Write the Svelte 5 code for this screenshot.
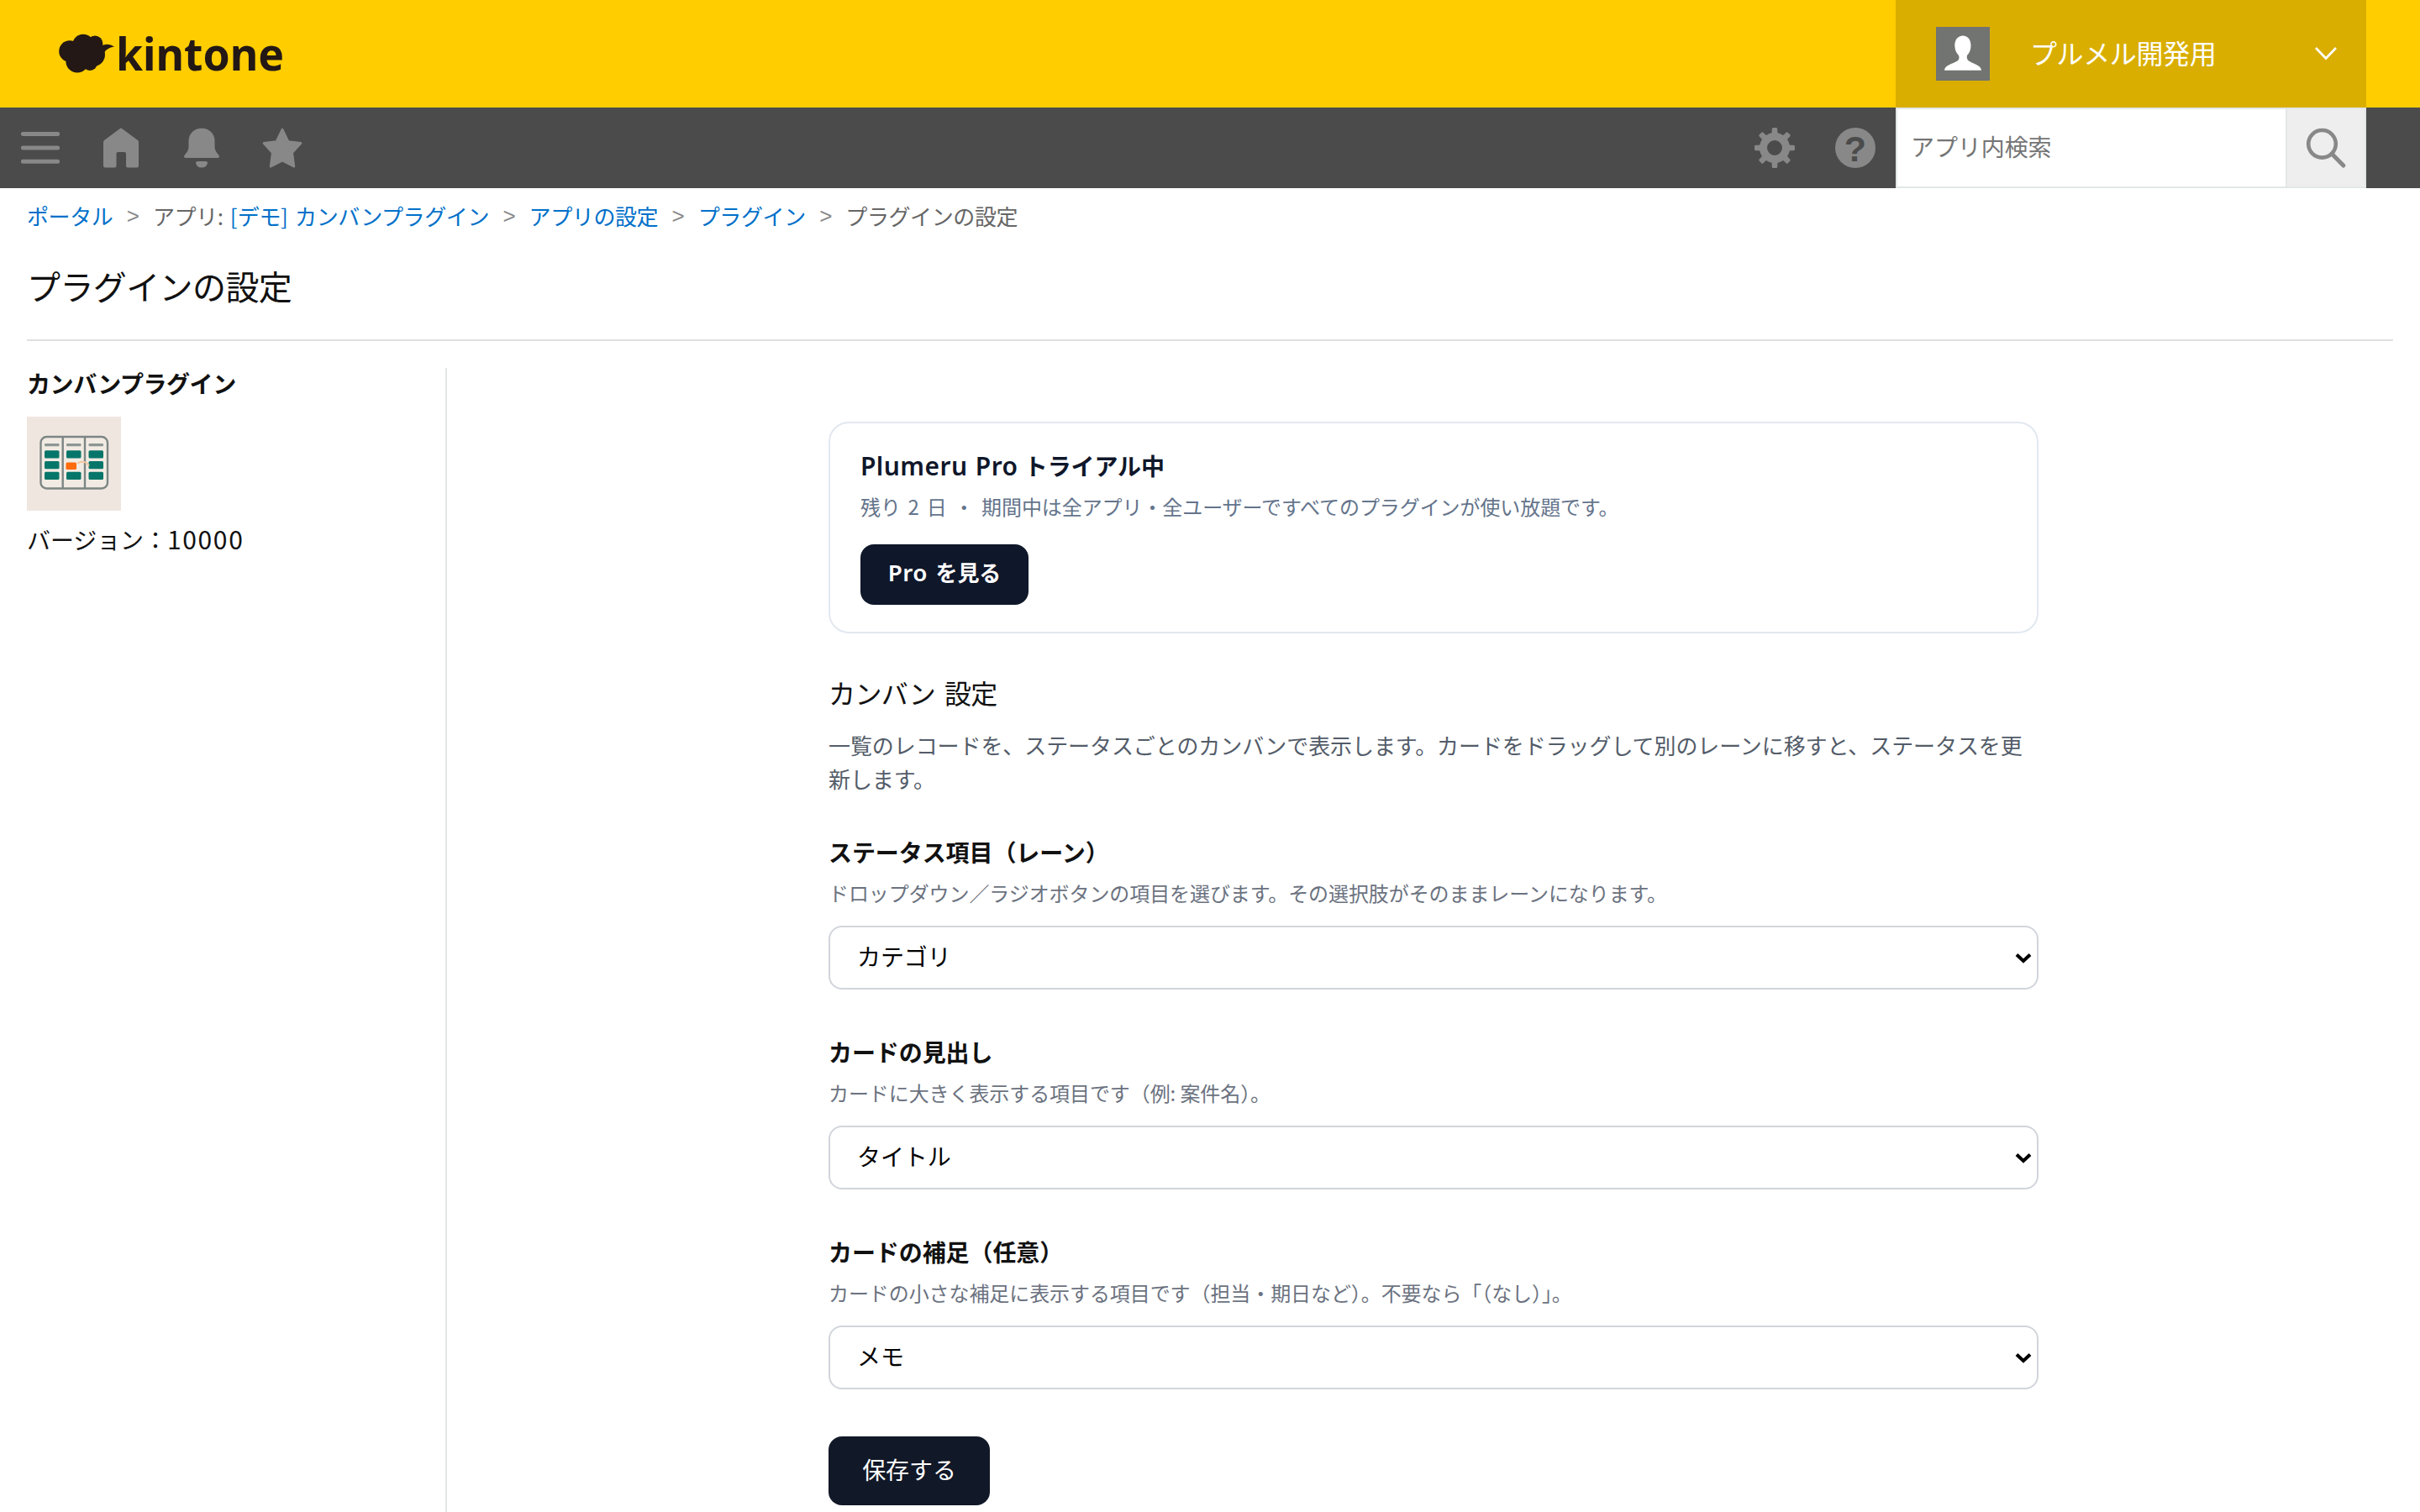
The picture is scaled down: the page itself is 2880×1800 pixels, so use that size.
<script lang="ts">
  interface Field {
    label: string;
    help: string;
    value: string;
  }

  const fields: Field[] = [
    {
      label: 'ステータス項目（レーン）',
      help: 'ドロップダウン／ラジオボタンの項目を選びます。その選択肢がそのままレーンになります。',
      value: 'カテゴリ'
    },
    {
      label: 'カードの見出し',
      help: 'カードに大きく表示する項目です（例: 案件名）。',
      value: 'タイトル'
    },
    {
      label: 'カードの補足（任意）',
      help: 'カードの小さな補足に表示する項目です（担当・期日など）。不要なら「（なし）」。',
      value: 'メモ'
    }
  ];

  const gearTeeth = [0, 45, 90, 135, 180, 225, 270, 315];
  const laneX = [21, 47, 73.5];
</script>

<div class="page">
  <header class="header">
    <svg class="logo" width="280" height="128" viewBox="66 0 280 128">
      <g fill="#231815">
        <circle cx="83" cy="61" r="12.8" />
        <circle cx="99" cy="53.5" r="12.8" />
        <circle cx="113" cy="52" r="9.4" />
        <circle cx="92" cy="73" r="13.6" />
        <circle cx="107" cy="75" r="9" />
        <circle cx="111" cy="65" r="14" />
        <circle cx="100" cy="66" r="14" />
        <path d="M120 54.5 Q129 50.5 136 55.5 Q127 57 123.5 63 L116 62 Z" />
        <text x="138" y="83.5" class="logo-text" textLength="200" lengthAdjust="spacingAndGlyphs">kintone</text>
      </g>
    </svg>
    <div class="user">
      <svg class="avatar" width="64" height="64" viewBox="0 0 64 64">
        <rect width="64" height="64" fill="#727472" />
        <path
          d="M32 10.5 C38 10.5 41.5 15.5 41.5 22 C41.5 27 40 31 37 34 C36.3 36.5 37 39 39 40.5 C43 43.5 54 45.5 54 51.8 H10 C10 45.5 21 43.5 25.5 40.5 C27.5 39 28 36.5 27 34 C24 31 22.3 27 22.3 22 C22.3 15.5 26 10.5 32 10.5 Z"
          fill="#fff"
        />
      </svg>
      <span class="user-name">プルメル開発用</span>
      <svg width="28" height="20" viewBox="0 0 28 20">
        <path d="M2 3 L14 15.5 L26 3" fill="none" stroke="#fff" stroke-width="2.6" />
      </svg>
    </div>
  </header>

  <nav class="toolbar">
    <div class="tool">
      <svg width="48" height="48" viewBox="0 0 48 48">
        <path d="M3.4 7.5 H44.6 M3.4 24 H44.6 M3.4 40.3 H44.6" stroke="#888" stroke-width="5" stroke-linecap="round" />
      </svg>
    </div>
    <div class="tool">
      <svg width="48" height="48" viewBox="0 0 48 48">
        <path
          d="M22.6 1.2 Q24 0 25.4 1.2 L44 15 Q45 16 45 17.2 V45.5 Q45 47.5 43 47.5 H32 Q30 47.5 30 45.5 V31 Q30 29 28 29 H20.5 Q18.5 29 18.5 31 V45.5 Q18.5 47.5 16.5 47.5 H5 Q3 47.5 3 45.5 V17.2 Q3 16 4 15 Z"
          fill="#888"
        />
      </svg>
    </div>
    <div class="tool">
      <svg width="48" height="48" viewBox="0 0 48 48">
        <path
          d="M24 0.7 C33 0.7 39.5 7 39.5 15.5 V22 C39.5 27.5 42 29.5 44.5 33 C45.5 34.5 44.8 36 43 36 H5 C3.2 36 2.5 34.5 3.5 33 C6 29.5 8.5 27.5 8.5 22 V15.5 C8.5 7 15 0.7 24 0.7 Z"
          fill="#888"
        />
        <path d="M19 40 H29 Q31 40 31 42 Q30 47.5 24 47.5 Q18 47.5 17 42 Q17 40 19 40 Z" fill="#888" />
      </svg>
    </div>
    <div class="tool">
      <svg width="48" height="48" viewBox="0 0 48 48">
        <path
          d="M24 2.3 L31 16.8 L45.8 18.5 L35.5 29.8 L37.7 46 L24 38.8 L10.3 46 L12.5 29.8 L2.2 18.5 L17 16.8 Z"
          fill="#888"
          stroke="#888"
          stroke-width="3"
          stroke-linejoin="round"
        />
      </svg>
    </div>
    <div class="spacer"></div>
    <div class="tool">
      <svg width="48" height="48" viewBox="0 0 48 48">
        <circle cx="24" cy="24" r="13.5" fill="none" stroke="#888" stroke-width="9" />
        {#each gearTeeth as angle}
          <path
            d="M19.5 9 L20.7 5 V1.5 Q20.7 0 22.2 0 H25.8 Q27.3 0 27.3 1.5 V5 L28.5 9 Z"
            fill="#888"
            transform="rotate({angle} 24 24)"
          />
        {/each}
      </svg>
    </div>
    <div class="tool">
      <svg width="48" height="48" viewBox="0 0 48 48">
        <circle cx="24" cy="24" r="24" fill="#888" />
        <text x="24" y="40" class="help-mark">?</text>
      </svg>
    </div>
    <div class="search">
      <input class="search-input" type="text" placeholder="アプリ内検索" />
      <button class="search-button" aria-label="検索">
        <svg width="48" height="48" viewBox="0 0 48 48">
          <circle cx="19.5" cy="19.3" r="16.3" fill="none" stroke="#888" stroke-width="4.6" />
          <path d="M31 31 L44.8 45" stroke="#888" stroke-width="5" stroke-linecap="round" />
        </svg>
      </button>
    </div>
  </nav>

  <div class="breadcrumb">
    <a href="#portal">ポータル</a>
    <span class="sep">&gt;</span>
    <span>アプリ</span><span class="colon">:</span>
    <a href="#app"><span class="bracket">[</span>デモ<span class="bracket">]</span><span class="space"></span>カンバンプラグイン</a>
    <span class="sep">&gt;</span>
    <a href="#settings">アプリの設定</a>
    <span class="sep">&gt;</span>
    <a href="#plugins">プラグイン</a>
    <span class="sep">&gt;</span>
    <span>プラグインの設定</span>
  </div>

  <h1>プラグインの設定</h1>

  <div class="body">
    <aside class="sidebar">
      <h2>カンバンプラグイン</h2>
      <svg class="plugin-icon" width="112" height="112" viewBox="0 0 112 112">
        <rect width="112" height="112" fill="#f0e6e0" />
        <rect x="16.5" y="24" width="79.5" height="61.5" rx="7" fill="#f2ebe3" stroke="#7c8684" stroke-width="2.4" />
        <path d="M42.7 24 V85 M69 24 V85" stroke="#7c8684" stroke-width="2.4" />
        {#each laneX as x, i}
          <rect {x} y="32" width="17.5" height="3.2" rx="1" fill="#8d9693" />
          <rect {x} y="40.3" width="17.5" height="9.2" rx="1.5" fill="#07766a" />
          {#if i !== 1}
            <rect {x} y="53" width="17.5" height="9.2" rx="1.5" fill="#07766a" />
          {/if}
          <rect {x} y="65.7" width="17.5" height="9.2" rx="1.5" fill="#07766a" />
        {/each}
        <rect x="46.5" y="54.6" width="12.5" height="8.4" rx="1.5" fill="#ff6b0b" />
        <path d="M60 55.5 Q69 51 74 58.5" fill="none" stroke="#f3c6a0" stroke-width="2" />
      </svg>
      <p>バージョン：<span class="digits">10000</span></p>
    </aside>

    <main class="main">
      <section class="trial">
        <h3><span class="latin">Plumeru Pro</span> トライアル中</h3>
        <p>残り 2 日 ・ 期間中は全アプリ・全ユーザーですべてのプラグインが使い放題です。</p>
        <button class="pro-button"><span class="latin">Pro</span> を見る</button>
      </section>

      <h2 class="settings-title">カンバン 設定</h2>
      <p class="lead">
        一覧のレコードを、ステータスごとのカンバンで表示します。カードをドラッグして別のレーンに移すと、ステータスを更新します。
      </p>

      {#each fields as field}
        <div class="field">
          <div class="label">{field.label}</div>
          <div class="help">{field.help}</div>
          <div class="select-wrap">
            <select>
              <option>{field.value}</option>
            </select>
            <svg class="arrow" width="20" height="14" viewBox="0 0 20 14">
              <path d="M2 2.5 L10 10 L18 2.5" fill="none" stroke="#000" stroke-width="4" />
            </svg>
          </div>
        </div>
      {/each}

      <button class="save-button">保存する</button>
    </main>
  </div>
</div>

<style>
  :global(body) {
    margin: 0;
    background: #fff;
  }

  .page {
    display: flex;
    flex-direction: column;
    width: 2880px;
    height: 1800px;
    overflow: hidden;
    font-family: 'Noto Sans CJK JP', sans-serif;
    font-size: 28px;
    letter-spacing: -0.003em;
    color: #111;
  }

  h1,
  h2,
  h3,
  p {
    margin: 0;
    font-weight: 400;
  }

  svg {
    display: block;
    flex: none;
  }

  button,
  input,
  select {
    font-family: inherit;
    letter-spacing: inherit;
    border: none;
    margin: 0;
  }

  a {
    color: #0070c9;
    text-decoration: none;
  }

  .header {
    display: flex;
    justify-content: space-between;
    height: 128px;
    padding: 0 64px 0 66px;
    background: #ffcd00;
  }

  .logo-text {
    font-family: 'Noto Sans', sans-serif;
    font-size: 54px;
    font-weight: 700;
    letter-spacing: 0;
  }

  .user {
    display: flex;
    align-items: center;
    box-sizing: border-box;
    width: 560px;
    padding: 0 34px 0 48px;
    background: #d9ae00;
  }

  .user-name {
    flex: 1;
    margin-left: 48px;
    padding-bottom: 4px;
    font-size: 32px;
    line-height: 64px;
    letter-spacing: -0.012em;
    color: #fff;
  }

  .toolbar {
    display: flex;
    height: 96px;
    padding-right: 64px;
    background: #4b4b4b;
  }

  .tool {
    display: flex;
    align-items: center;
    justify-content: center;
    width: 96px;
  }

  .spacer {
    flex: 1;
  }

  .help-mark {
    font-family: 'Liberation Sans', sans-serif;
    font-size: 43px;
    font-weight: 700;
    letter-spacing: 0;
    text-anchor: middle;
    fill: #4b4b4b;
  }

  .search {
    display: flex;
    box-sizing: border-box;
    width: 560px;
    border: 2px solid #e3e7e8;
    background: #fff;
  }

  .search-input {
    flex: 1;
    min-width: 0;
    padding: 0 16px 4px;
    font-size: 28px;
    background: #fff;
  }

  .search-input::placeholder {
    color: #757575;
  }

  .search-button {
    display: flex;
    align-items: center;
    justify-content: center;
    box-sizing: border-box;
    width: 94px;
    padding: 0;
    border-left: 2px solid #e3e7e8;
    background: #eee;
  }

  .breadcrumb {
    display: flex;
    align-items: center;
    box-sizing: border-box;
    height: 68px;
    padding: 0 0 4px 32px;
    font-size: 26px;
    letter-spacing: -0.015em;
    color: #666;
  }

  .sep {
    width: 47.5px;
    padding-top: 3px;
    font-family: 'Liberation Sans', sans-serif;
    text-align: center;
    color: #888;
  }

  .colon {
    width: 14px;
    padding-right: 1px;
  }

  .bracket {
    display: inline-block;
    width: 9px;
  }

  .space {
    display: inline-block;
    width: 8px;
  }

  h1 {
    margin: 0 32px;
    height: 112px;
    border-bottom: 2px solid #dfdfdf;
    font-size: 40px;
    line-height: 97px;
    letter-spacing: -0.015em;
  }

  .body {
    display: flex;
    flex: 1;
    margin-top: 32px;
  }

  .sidebar {
    box-sizing: border-box;
    width: 532px;
    padding-left: 32px;
    border-right: 2px solid #e3e7e8;
  }

  .sidebar h2 {
    font-size: 28px;
    font-weight: 700;
    line-height: 36px;
    letter-spacing: -0.015em;
  }

  .plugin-icon {
    margin-top: 22px;
  }

  .sidebar p {
    margin-top: 14px;
    line-height: 38px;
  }

  .digits {
    font-size: 30px;
    letter-spacing: 0.055em;
  }

  .main {
    flex: none;
    width: 1440px;
    margin: 64px auto 0;
  }

  .trial {
    box-sizing: border-box;
    height: 252px;
    padding: 30px 36px;
    border: 2px solid #e2e8f0;
    border-radius: 24px;
    color: #0f172a;
  }

  .trial h3 {
    height: 40px;
    font-size: 28px;
    font-weight: 700;
    line-height: 40px;
    word-spacing: 1px;
  }

  .latin {
    font-family: 'Noto Sans', sans-serif;
    font-size: 1.07em;
    font-weight: 600;
    letter-spacing: 0.015em;
  }

  .trial p {
    margin-top: 11px;
    font-size: 24px;
    line-height: 36px;
    word-spacing: 3.5px;
    color: #64748b;
  }

  .pro-button {
    display: block;
    width: 200px;
    height: 72px;
    margin-top: 27px;
    padding: 0 0 6px;
    border-radius: 16px;
    font-size: 26px;
    font-weight: 700;
    word-spacing: 4px;
    color: #fff;
    background: #0f172a;
  }

  .settings-title {
    margin-top: 46px;
    font-size: 32px;
    line-height: 48px;
    letter-spacing: -0.018em;
    word-spacing: 4px;
  }

  .lead {
    margin: 19px 0 47px;
    font-size: 26px;
    line-height: 40px;
    color: #535c69;
  }

  .field {
    display: flex;
    flex-direction: column;
    height: 184px;
    margin-bottom: 54px;
  }

  .label {
    font-weight: 700;
    line-height: 40px;
  }

  .help {
    margin-top: 11px;
    font-size: 24px;
    line-height: 36px;
    color: #6b7280;
  }

  .select-wrap {
    position: relative;
    height: 76px;
    margin-top: auto;
  }

  select {
    appearance: none;
    box-sizing: border-box;
    width: 100%;
    height: 76px;
    padding: 0 32px 4px;
    border: 2px solid #d1d5db;
    border-radius: 16px;
    font-size: 28px;
    color: #000;
    background: #fff;
  }

  .arrow {
    position: absolute;
    top: 32px;
    right: 8px;
    pointer-events: none;
  }

  .save-button {
    width: 192px;
    height: 82px;
    margin-top: 2px;
    padding: 0 0 4px;
    border-radius: 16px;
    font-size: 28px;
    color: #fff;
    background: #111827;
  }
</style>
